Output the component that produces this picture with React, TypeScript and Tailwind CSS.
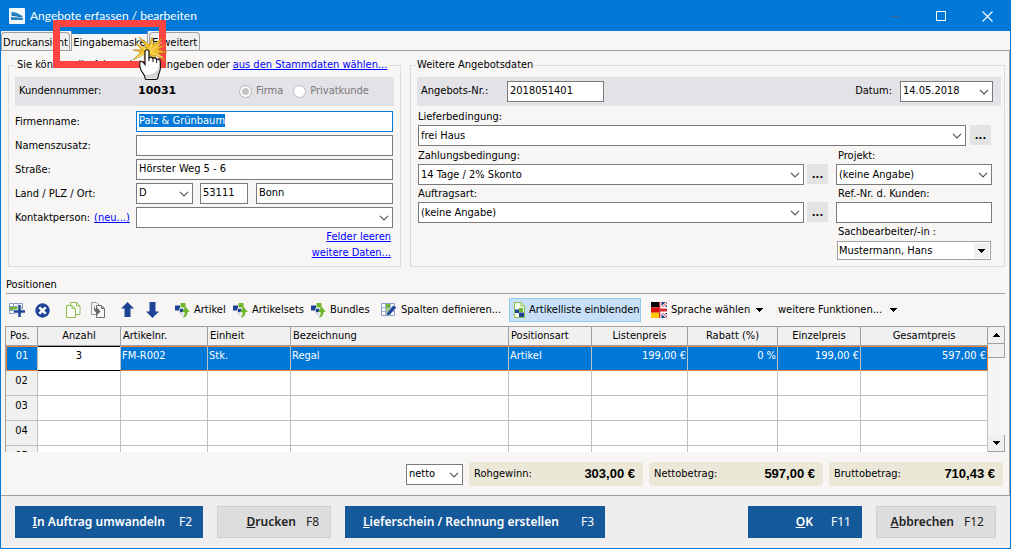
import { useEffect, useRef } from "react";
import type { ReactNode } from "react";
import clsx from "clsx";

const columns = [
    { title: "Pos.", width: "w-8", head: "text-left pl-1", cell: "text-center" },
    { title: "Anzahl", width: "w-[83px]", head: "text-center", cell: "text-center" },
    { title: "Artikelnr.", width: "w-[87px]", head: "text-left pl-0.5", cell: "text-left" },
    { title: "Einheit", width: "w-[83px]", head: "text-left pl-0.5", cell: "text-left" },
    { title: "Bezeichnung", width: "", head: "text-left pl-0.5", cell: "text-left" },
    { title: "Positionsart", width: "w-[83px]", head: "text-left pl-0.5", cell: "text-left" },
    { title: "Listenpreis", width: "w-24", head: "text-center", cell: "text-right" },
    { title: "Rabatt (%)", width: "w-[90px]", head: "text-center", cell: "text-right" },
    { title: "Einzelpreis", width: "w-[83px]", head: "text-center", cell: "text-right" },
    { title: "Gesamtpreis", width: "w-[127px]", head: "text-center", cell: "text-right" },
];

const rows = [
    ["01", "3", "FM-R002", "Stk.", "Regal", "Artikel", "199,00 €", "0 %", "199,00 €", "597,00 €"],
    ["02", "", "", "", "", "", "", "", "", ""],
    ["03", "", "", "", "", "", "", "", "", ""],
    ["04", "", "", "", "", "", "", "", "", ""],
    ["05", "", "", "", "", "", "", "", "", ""],
];

const totals = [
    { id: "rohgewinn", label: "Rohgewinn:", value: "303,00 €" },
    { id: "netto", label: "Nettobetrag:", value: "597,00 €" },
    { id: "brutto", label: "Bruttobetrag:", value: "710,43 €" },
];

const box = "h-[21px] min-w-0 border border-[#7a7a7a] bg-white px-0.5 text-black outline-none";
const field = clsx(box, "pb-0.5");
const link = "text-[#0000ff] underline";

const Select = ({ id, value, className, label }: { id: string; value: string; className?: string; label?: string }) => (
    <div className={clsx("relative flex min-w-0", className)}>
        <select id={id} aria-label={label} className={clsx(box, "w-full appearance-none")}>
            <option>{value}</option>
        </select>
        <svg className="pointer-events-none absolute right-1 top-2 h-[6px] w-[10px]" viewBox="0 0 10 6" fill="none" stroke="#555" strokeWidth="1.2">
            <path d="M1 0.8 5 4.8 9 0.8" />
        </svg>
    </div>
);

const DotsButton = ({ label }: { label: string }) => (
    <button aria-label={label} className="h-5 w-[21px] shrink-0 bg-[#e3e3e3] font-bold leading-none text-black">...</button>
);

const Triangle = ({ up }: { up?: boolean }) => (
    <svg className="h-1 w-[7px] shrink-0" viewBox="0 0 7 4" shapeRendering="crispEdges">
        <path d={up ? "M0 4h7L4 0H3z" : "M0 0h7L4 4H3z"} fill="#000" />
    </svg>
);

const InsertIcon = () => (
    <svg width="16" height="16" viewBox="0 0 16 16">
        <path d="M0.500 1.500h13v10h-13z" fill="#fff" stroke="#8b9dc4" />
        <path d="M0 4.500h14M0 8.500h14M4.500 1v11M9 1v11" stroke="#8b9dc4" />
        <path d="M1 5h12v3H1z" fill="#6fb62c" />
        <path d="M10.500 3v12M4.500 9.500H16" stroke="#fff" strokeWidth="4" />
        <path d="M10.500 3v12M5 9.500h11" stroke="#1f4396" strokeWidth="2.500" />
    </svg>
);

const DeleteIcon = () => (
    <svg width="15" height="15" viewBox="0 0 15 15">
        <circle cx="7.500" cy="7.500" r="7.200" fill="#1f4396" />
        <path d="M4.300 4.300l6.400 6.400M10.700 4.300l-6.400 6.400" stroke="#fff" strokeWidth="2.600" />
    </svg>
);

const CopyIcon = () => (
    <svg width="15" height="16" viewBox="0 0 15 16" fill="#fbfdf8" stroke="#8cc152">
        <path d="M4.500 0.500h6l3.500 3.500v8.500H4.500z" />
        <path d="M10.500 0.500v3.500H14" fill="none" />
        <path d="M0.500 3.500h5.500l3.500 3v9h-9z" />
        <path d="M6 3.500v3h3.500" fill="none" />
    </svg>
);

const PasteIcon = () => (
    <svg width="14" height="16" viewBox="0 0 14 16" fill="#f8f8f8" stroke="#6b6b6b">
        <path d="M0.500 0.500h5l3 3v9h-8z" stroke="#9a9a9a" />
        <path d="M5.500 3.500h5l3 3v9h-8z" />
        <path d="M10.500 3.500v3h3" fill="none" />
        <path d="M3.500 2.500c-.5 3 .5 4.500 2.500 5V5.500l3.500 4L6 13v-2.500C3 10 2 6 3.500 2.500z" fill="#666" stroke="none" />
    </svg>
);

const ArrowIcon = ({ down }: { down?: boolean }) => (
    <svg width="13" height="16" viewBox="0 0 13 16" fill="#1f4396">
        <path d={down ? "M6.500 16L0 9.500h3.500V0h6v9.500H13z" : "M6.500 0L0 6.500h3.500V15h6V6.500H13z"} />
    </svg>
);

const ArticleIcon = () => (
    <svg width="15" height="15" viewBox="0 0 15 15">
        <path d="M0 2.500h5v5H0z" fill="#1f4396" />
        <path d="M5.500 0h5v4.500h-5z" fill="#6fb62c" />
        <path d="M4.500 5.500h4v4h-4z" fill="#1f4396" stroke="#f7f6f5" strokeWidth=".6" />
        <path d="M5 10.500c1.800.5 2.800 1 3.500 3" fill="none" stroke="#9db0d8" strokeWidth=".8" />
        <path d="M10.500 3.500L14.800 9h-2.300c0 3-1.300 4.800-4.500 6 1.300-2 1.700-3.500 1.500-6H7z" fill="#6fb62c" />
    </svg>
);

const ColumnsIcon = () => (
    <svg width="16" height="14" viewBox="0 0 16 14">
        <path d="M0.500 0.500h13v12h-13z" fill="#fff" stroke="#8b9dc4" />
        <path d="M5 1h4v12H5z" fill="#a5d16b" />
        <path d="M5 1h4v3H5z" fill="#6fb62c" />
        <path d="M0 4.500h14M0 8.500h14M4.500 0v13M9.500 0v13" stroke="#8b9dc4" strokeWidth=".8" />
        <path d="M5 13.500l1.200-4L12.500 2l3 2.500-6.700 7.500z" fill="#1f4396" stroke="#fff" strokeWidth=".5" />
    </svg>
);

const ListIcon = () => (
    <svg className="shrink-0" width="11" height="16" viewBox="0 0 11 16">
        <path d="M0.500 0.500h6.500l3.500 3.500v11.500h-10z" fill="#f5faef" stroke="#8cc152" />
        <path d="M7 0.500v3.500h3.500" fill="none" stroke="#8cc152" />
        <path d="M1 7.500h4V11H1zM5 10.500h5V15H5z" fill="#1f4396" />
        <path d="M5 6h4v4H5z" fill="#6fb62c" />
    </svg>
);

const FlagIcon = () => (
    <svg width="16" height="16" viewBox="0 0 16 16">
        <path d="M8 0h8v16H8z" fill="#263c87" />
        <path d="M7 9L16 1M7 7l9 8" stroke="#fff" strokeWidth="3" />
        <path d="M8 8L16 1M8 8l8 7" stroke="#d82b36" />
        <path d="M8 5h8v6H8z" fill="#fff" />
        <path d="M8 0h2.500v16H8z" fill="#fff" />
        <path d="M8 6.500h8v3H8zM8 0h1.300v16H8z" fill="#d82b36" />
        <path d="M0 0h8v5.300H0z" fill="#000" />
        <path d="M0 5.300h8v5.400H0z" fill="#dd1010" />
        <path d="M0 10.700h8V16H0z" fill="#ffc800" />
    </svg>
);

const HandPointer = () => (
    <svg className="pointer-events-none absolute left-[131px] top-[36px]" width="36" height="44" viewBox="0 0 36 44">
        <path
            d="M15 11L7 0l10.500 8L20 0l1.500 7.500L30 1l-5 8.500 8-1-7 4 9 3-9.500.500L34 24l-11-6 1 6-6-6-6 4 1-5-12 6 8-8-8-2 9-.500-6-5.500z"
            fill="#f0bf2a" stroke="#b78710" strokeWidth=".6"
        />
        <path d="M15 13L4 6M18 13l3-9M19 14l11-9M18 15l13 5M14 16l-9 4" stroke="#fff0a0" strokeWidth=".8" />
        <path
            d="M13 15c0-3 4-3 4 0v6.500c0-2 4-2 4 .500 0-1.700 3.700-1.500 3.700 1 0-1.500 3.600-1.300 3.600 1.500v7c0 3-2 5-2.300 9q-.3 2-2 2H14.500q-1.500 0-1.500-2c0-3-4.500-6-5-10.500-.300-3-1-4.500.500-5.500s3.500 1.500 4.500 3z"
            fill="#fff" stroke="#111" strokeWidth="1.200"
        />
        <path d="M17 20v4M21 21v4M24.700 23v3" stroke="#111" />
        <path d="M14 41.500h11c0-4 2.700-7 2.700-11v-5c-1 8-5 13-14.700 12z" fill="#b9b9b9" opacity=".6" />
    </svg>
);

const ToolButton = ({ icon, children, label }: { icon: ReactNode; children?: ReactNode; label?: string }) => (
    <button aria-label={label} className="flex h-6 shrink-0 items-center gap-1 whitespace-nowrap">
        {icon}
        {children}
    </button>
);

const FooterButton = ({ text, hotkey, primary, className }: { text: string; hotkey: string; primary?: boolean; className: string }) => (
    <button
        className={clsx(
            "flex h-8 shrink-0 items-center justify-end whitespace-nowrap pr-[11px] font-['Noto_Sans',sans-serif] text-xs",
            primary ? "bg-[#15599b] text-white" : "border border-[#cfcfcf] bg-[#dddddd] text-[#222]",
            className
        )}
    >
        <span className="font-semibold"><u>{text[0]}</u>{text.slice(1)}</span>
        <span>{hotkey}</span>
    </button>
);

const CustomerData = () => {
    const company = useRef<HTMLInputElement>(null);

    useEffect(() => {
        company.current?.focus();
        company.current?.select();
    }, []);

    return (
        <fieldset className="min-w-0 border border-[#dcdcdc] px-1.5">
            <legend className="whitespace-nowrap px-0.5 leading-[14px]">
                Sie können die Adressdaten eingeben oder <a href="#" className={link}>aus den Stammdaten wählen...</a>
            </legend>
            <div className="mt-[5px] flex h-[29px] items-center bg-[#e3e2e7] pl-1">
                <span className="w-[119px]">Kundennummer:</span>
                <b className="w-[101px] font-['DejaVu_Sans',sans-serif]">10031</b>
                <label className="flex items-center gap-1 text-[#777]">
                    <input type="radio" name="kind" disabled defaultChecked className="size-[13px] appearance-none rounded-full border border-[#bbb] bg-[#c4c4c4] shadow-[inset_0_0_0_2px_white]" />
                    Firma
                </label>
                <label className="ml-2.5 flex items-center gap-1 text-[#777]">
                    <input type="radio" name="kind" disabled className="size-[13px] appearance-none rounded-full border border-[#bbb] bg-white" />
                    Privatkunde
                </label>
            </div>
            <div className="mr-px mt-[5px] grid grid-cols-[121px_1fr] items-center gap-y-[3px] [&>label]:pt-0.5">
                <label htmlFor="company">Firmenname:</label>
                <input id="company" ref={company} defaultValue="Palz &amp; Grünbaum" className={clsx(field, "focus:border-[#0078d7] selection:bg-[#0078d7] selection:text-white")} />
                <label htmlFor="extra">Namenszusatz:</label>
                <input id="extra" className={field} />
                <label htmlFor="street">Straße:</label>
                <input id="street" defaultValue="Hörster Weg 5 - 6" className={field} />
                <label htmlFor="country">Land / PLZ / Ort:</label>
                <div className="flex">
                    <Select id="country" value="D" className="w-[57px]" />
                    <input aria-label="PLZ" defaultValue="53111" className={clsx(field, "ml-[7px] w-12")} />
                    <input aria-label="Ort" defaultValue="Bonn" className={clsx(field, "ml-2 flex-1")} />
                </div>
                <div className="flex gap-1 whitespace-nowrap pt-0.5">
                    <label htmlFor="contact">Kontaktperson:</label>
                    <a href="#" className={link}>(neu...)</a>
                </div>
                <Select id="contact" value="" />
            </div>
            <div className="mb-[5px] mr-[3px] mt-px flex flex-col items-end leading-4">
                <a href="#" className={link}>Felder leeren</a>
                <a href="#" className={link}>weitere Daten...</a>
            </div>
        </fieldset>
    );
};

const OfferData = () => (
    <fieldset className="min-w-0 border border-[#dcdcdc] pl-1.5 pr-[3px]">
        <legend className="-ml-px px-px leading-[14px]">Weitere Angebotsdaten</legend>
        <div className="mt-[5px] flex h-[29px] items-center bg-[#e3e2e7] pl-1 pr-2">
            <label htmlFor="offer" className="w-[86px]">Angebots-Nr.:</label>
            <input id="offer" defaultValue="2018051401" className={clsx(field, "w-[97px]")} />
            <label htmlFor="date" className="ml-auto mr-2">Datum:</label>
            <Select id="date" value="14.05.2018" className="w-[93px]" />
        </div>
        <div className="ml-px mr-2.5 mt-[3px] leading-4">
            <label htmlFor="delivery" className="block">Lieferbedingung:</label>
            <div className="flex gap-1">
                <Select id="delivery" value="frei Haus" className="flex-1" />
                <DotsButton label="Lieferbedingungen" />
            </div>
        </div>
        <div className="ml-px mr-[9px] mt-0.5 flex gap-2 leading-[15px]">
            <div className="flex flex-1 flex-col gap-px">
                <label htmlFor="payment">Zahlungsbedingung:</label>
                <div className="flex gap-[3px]">
                    <Select id="payment" value="14 Tage / 2% Skonto" className="flex-1" />
                    <DotsButton label="Zahlungsbedingungen" />
                </div>
                <label htmlFor="ordertype">Auftragsart:</label>
                <div className="flex gap-[3px]">
                    <Select id="ordertype" value="(keine Angabe)" className="flex-1" />
                    <DotsButton label="Auftragsarten" />
                </div>
            </div>
            <div className="flex w-[156px] flex-col gap-px">
                <label htmlFor="project" className="pl-0.5">Projekt:</label>
                <Select id="project" value="(keine Angabe)" />
                <label htmlFor="ref" className="pl-0.5">Ref.-Nr. d. Kunden:</label>
                <input id="ref" className={field} />
                <label htmlFor="clerk" className="pl-0.5">Sachbearbeiter/-in :</label>
                <div className="relative mx-px flex pt-px">
                    <select id="clerk" className="h-[19px] w-full appearance-none border border-[#a0a0a0] bg-white px-px text-black">
                        <option>Mustermann, Hans</option>
                    </select>
                    <span className="pointer-events-none absolute bottom-0.5 right-0.5 flex size-[15px] items-center justify-center bg-[#f0f0f0]">
                        <Triangle />
                    </span>
                </div>
            </div>
        </div>
    </fieldset>
);

const Toolbar = () => (
    <div className="flex h-8 items-center pl-1">
        <ToolButton label="Position einfügen" icon={<InsertIcon />} />
        <span className="w-2.5" />
        <ToolButton label="Position löschen" icon={<DeleteIcon />} />
        <span className="w-4" />
        <ToolButton label="Kopieren" icon={<CopyIcon />} />
        <span className="w-2.5" />
        <ToolButton label="Einfügen" icon={<PasteIcon />} />
        <span className="w-4" />
        <ToolButton label="Nach oben" icon={<ArrowIcon />} />
        <span className="w-3" />
        <ToolButton label="Nach unten" icon={<ArrowIcon down />} />
        <div className="ml-4 flex w-[58px]"><ToolButton icon={<ArticleIcon />}>Artikel</ToolButton></div>
        <div className="flex w-[78px]"><ToolButton icon={<ArticleIcon />}>Artikelsets</ToolButton></div>
        <div className="flex w-[70px]"><ToolButton icon={<ArticleIcon />}>Bundles</ToolButton></div>
        <div className="flex w-32"><ToolButton icon={<ColumnsIcon />}>Spalten definieren...</ToolButton></div>
        <button className="flex h-6 w-[132px] shrink-0 items-center gap-1 whitespace-nowrap border border-[#92c9f0] bg-[#c7e0f7] pl-1">
            <ListIcon />
            Artikelliste einblenden
        </button>
        <div className="ml-2.5 flex w-[127px]">
            <ToolButton icon={<FlagIcon />}>Sprache wählen<span className="ml-0.5 flex"><Triangle /></span></ToolButton>
        </div>
        <ToolButton icon={null}>weitere Funktionen...<span className="ml-1 flex"><Triangle /></span></ToolButton>
    </div>
);

const PositionsTable = () => (
    <div className="flex h-[126px] overflow-hidden border-l border-t border-[#a0a0a0] bg-white">
        <div className="min-w-0 flex-1 overflow-hidden">
            <table className="w-full table-fixed border-separate border-spacing-0 leading-[14px]">
                <thead>
                    <tr className="h-[19px] bg-[#f0f0f0]">
                        {columns.map((col) => (
                            <th key={col.title} className={clsx("border-b border-r border-[#a0a0a0] p-0 font-normal", col.width, col.head)}>{col.title}</th>
                        ))}
                    </tr>
                </thead>
                <tbody>
                    {rows.map((row, r) => (
                        <tr key={row[0]} className="h-[25px] align-top">
                            {row.map((cell, c) => (
                                <td
                                    key={c}
                                    className={clsx(
                                        "border-b border-r p-px pt-[3px]",
                                        columns[c].cell,
                                        r === 0 && c !== 1 && "border-b-[#ed7d31] bg-[#0078d7] text-white shadow-[inset_0_1px_0_#ed7d31]",
                                        r === 0 && c === 0 && "border-l border-l-[#ed7d31]",
                                        r === 0 && (c === 9 ? "border-r-[#ed7d31]" : "border-r-[#c0c0c0]"),
                                        r === 0 && c === 1 && "border-b-black bg-white shadow-[inset_0_1px_0_black]",
                                        r > 0 && "border-[#c0c0c0]",
                                        r > 0 && c === 0 && "bg-[#f0f0f0]"
                                    )}
                                >
                                    {cell}
                                </td>
                            ))}
                        </tr>
                    ))}
                </tbody>
            </table>
        </div>
        <div className="flex w-[17px] shrink-0 flex-col bg-[#f5f5f5]">
            <button aria-label="Nach oben scrollen" className="flex h-[17px] items-center justify-center border-b border-r border-[#a0a0a0] bg-[#f0f0f0]"><Triangle up /></button>
            <div className="flex-1">
                <div className="h-3.5 border-b border-r border-[#a0a0a0] bg-[#f0f0f0]" />
            </div>
            <button aria-label="Nach unten scrollen" className="flex h-[17px] items-center justify-center border-b border-r border-[#a0a0a0] bg-[#f0f0f0]"><Triangle /></button>
        </div>
    </div>
);

const App = () => {
    return (
        <div className="relative flex min-h-screen flex-col border border-[#0078d7] bg-[#eeeeee] font-['DejaVu_Sans_Condensed','Noto_Sans',sans-serif] text-[11px] text-black">
            <header className="flex h-[30px] items-center bg-[#0078d7] pl-2 text-white">
                <svg width="16" height="16" viewBox="0 0 16 16">
                    <rect width="16" height="16" rx="1" fill="#f2f7fb" />
                    <path d="M2.500 4l4.500.500L13.500 8v1L2.500 7zM2 9l12 .800v2.200H2z" fill="#2686c5" />
                    <path d="M2.500 7.200l10 1.600" stroke="#12639e" />
                </svg>
                <h1 className="ml-[5px] flex-1 font-['Lato',sans-serif] text-xs">Angebote erfassen / bearbeiten</h1>
                <button aria-label="Minimieren" className="flex h-full w-[46px] items-center justify-center"><span className="h-px w-2.5 bg-[#3f668a]" /></button>
                <button aria-label="Maximieren" className="flex h-full w-[46px] items-center justify-center"><span className="size-2.5 border border-white" /></button>
                <button aria-label="Schließen" className="flex h-full w-[46px] items-center justify-center">
                    <svg width="11" height="11" viewBox="0 0 11 11" stroke="#fff" strokeWidth="1.100"><path d="M.5 .5l10 10M10.500 .5l-10 10" /></svg>
                </button>
            </header>
            <nav className="flex h-5 items-end gap-px border-b border-[#a0a0a0] bg-[#f7f6f5]">
                <button className="h-[18px] w-[69px] whitespace-nowrap rounded-t-sm border border-b-0 border-[#a0a0a0] bg-[#f0f0f0] pt-0.5">Druckansicht</button>
                <button className="-mb-px h-5 w-[77px] whitespace-nowrap border border-b-0 border-t-[3px] border-[#a0a0a0] border-t-[#0078d7] bg-[#f7f6f5] pt-px">Eingabemaske</button>
                <button className="h-[18px] w-[51px] whitespace-nowrap rounded-t-sm border border-b-0 border-[#a0a0a0] bg-[#f0f0f0] pt-0.5">Erweitert</button>
            </nav>
            <main className="flex flex-1 flex-col border-b border-r border-[#a0a0a0] bg-[#f7f6f5] px-1">
                <div className="ml-[3px] mt-[7px] grid grid-cols-[393px_1fr] gap-[9px]">
                    <CustomerData />
                    <OfferData />
                </div>
                <h2 className="ml-px mt-2.5 border-b border-[#a0a0a0] leading-4">Positionen</h2>
                <Toolbar />
                <PositionsTable />
                <div className="mb-2 mt-2.5 flex items-center justify-end gap-1.5 pr-0.5">
                    <Select id="mode" label="Preisart" value="netto" className="w-[57px]" />
                    {totals.map((t) => (
                        <div key={t.id} className="flex h-6 w-[174px] items-center justify-between rounded bg-[#ebe8d8] pl-[5px] pr-2">
                            <span>{t.label}</span>
                            <b className="font-['Liberation_Sans',sans-serif] text-[13px]">{t.value}</b>
                        </div>
                    ))}
                </div>
            </main>
            <footer className="flex gap-3.5 px-3.5 py-2.5">
                <FooterButton primary text="In Auftrag umwandeln" hotkey="F2" className="w-[188px] gap-3.5" />
                <FooterButton text="Drucken" hotkey="F8" className="w-[114px] gap-2.5" />
                <FooterButton primary text="Lieferschein / Rechnung erstellen" hotkey="F3" className="w-[260px] gap-[22px]" />
                <FooterButton primary text="OK" hotkey="F11" className="ml-auto w-[114px] gap-[18px]" />
                <FooterButton text="Abbrechen" hotkey="F12" className="w-[120px] gap-2.5" />
            </footer>
            {/* marks the tab to open */}
            <div className="pointer-events-none absolute left-[52px] top-[19px] h-12 w-[113px] border-[7px] border-[#fe4343]" />
            <HandPointer />
        </div>
    );
};

export default App;
